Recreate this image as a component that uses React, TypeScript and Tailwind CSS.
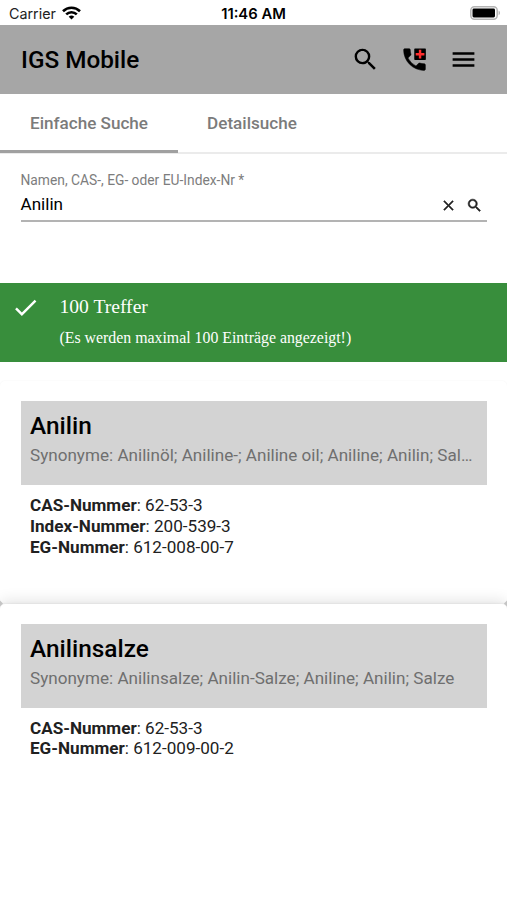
import type { ReactNode } from "react"

const SEARCH =
  "M15.5 14h-.79l-.28-.27A6.471 6.471 0 0 0 16 9.5 6.5 6.5 0 1 0 9.5 16c1.61 0 3.09-.59 4.23-1.57l.27.28v.79l5 4.99L20.49 19l-4.99-5zm-6 0C7.01 14 5 11.99 5 9.5S7.01 5 9.5 5 14 7.01 14 9.5 11.99 14 9.5 14z"

type Result = {
  name: string
  synonyms: string
  numbers: { label: string; value: string }[]
}

const results: Result[] = [
  {
    name: "Anilin",
    synonyms: "Anilinöl; Aniline-; Aniline oil; Aniline; Anilin; Sal…",
    numbers: [
      { label: "CAS-Nummer", value: "62-53-3" },
      { label: "Index-Nummer", value: "200-539-3" },
      { label: "EG-Nummer", value: "612-008-00-7" },
    ],
  },
  {
    name: "Anilinsalze",
    synonyms: "Anilinsalze; Anilin-Salze; Aniline; Anilin; Salze",
    numbers: [
      { label: "CAS-Nummer", value: "62-53-3" },
      { label: "EG-Nummer", value: "612-009-00-2" },
    ],
  },
]

function Icon({ className, children }: { className: string; children: ReactNode }) {
  return (
    <svg viewBox="0 0 24 24" fill="currentColor" className={className}>
      {children}
    </svg>
  )
}

function StatusBar() {
  return (
    <div className="grid h-[25px] grid-cols-3 items-center pt-[3px] font-[Inter,sans-serif] text-black">
      <div className="flex items-center gap-[6px] pl-[9px] text-[14.3px] leading-none text-[#222]">
        <span>Carrier</span>
        <svg viewBox="0 0 19 14" className="-mt-[2px] h-[14px] w-[19px] text-black" fill="none" stroke="currentColor" strokeWidth="2.6">
          <path d="M1 5.2a12.2 12.2 0 0 1 17 0" />
          <path d="M4.2 8.4a7.6 7.6 0 0 1 10.6 0" />
          <path d="M9.5 13.6 6.7 10.8a4 4 0 0 1 5.6 0z" fill="currentColor" stroke="none" />
        </svg>
      </div>
      <div className="text-center text-[14.8px] leading-none font-semibold">11:46 AM</div>
      <div className="-mt-[2px] flex justify-end pr-[6px]">
        <svg viewBox="0 0 31 14" className="h-[14px] w-[31px]">
          <rect x="0.8" y="0.8" width="26.4" height="12.4" rx="3.6" fill="#fff" stroke="#b4b4b4" strokeWidth="1.5" />
          <rect x="2.5" y="2.5" width="22.5" height="9" rx="1.4" fill="#000" />
          <path d="M28.6 4.8c1.8.6 1.8 3.8 0 4.4z" fill="#b4b4b4" />
        </svg>
      </div>
    </div>
  )
}

function Header() {
  return (
    <header className="flex h-[69px] items-center justify-between bg-[#a6a6a6] pr-[29.5px] pl-[21px] text-black">
      <h1 className="pt-[2px] text-[24.3px] leading-none font-medium">IGS Mobile</h1>
      <div className="flex items-center gap-[20px]">
        <Icon className="size-[29px]">
          <path d={SEARCH} />
        </Icon>
        <Icon className="size-[29px]">
          <path
            d="M20 15.5c-1.25 0-2.45-.2-3.57-.57a1.02 1.02 0 0 0-1.02.24l-2.2 2.2a15.045 15.045 0 0 1-6.59-6.59l2.2-2.21a.96.96 0 0 0 .25-1A11.36 11.36 0 0 1 8.5 4c0-.55-.45-1-1-1H4c-.55 0-1 .45-1 1 0 9.39 7.61 17 17 17 .55 0 1-.45 1-1v-3.5c0-.55-.45-1-1-1z"
            stroke="currentColor"
            strokeWidth="0.4"
          />
          <rect x="11.8" y="2.8" width="9.6" height="9.6" rx="0.6" />
          <path d="M15.6 4h2v2.6h2.6v2h-2.6v2.6h-2V8.6H13v-2h2.6z" fill="#ff2d2d" />
        </Icon>
        <Icon className="size-[29px]">
          <path d="M3 18h18v-2H3v2zm0-5h18v-2H3v2zm0-7v2h18V6H3z" />
        </Icon>
      </div>
    </header>
  )
}

function Tabs() {
  return (
    <nav className="flex h-[60px] border-b-2 border-[#ebebeb] text-[17.1px] font-medium text-[#7b7b7b]">
      <div className="-mb-px flex w-[178px] items-center justify-center border-b-[3px] border-[#a0a0a0] pt-[3px]">
        Einfache Suche
      </div>
      <div className="flex w-[148px] items-center justify-center pt-px">Detailsuche</div>
    </nav>
  )
}

function SearchField() {
  return (
    <div className="mx-[20.5px] mt-[18px] h-[50px] border-b-2 border-[#b3b3b3]">
      <div className="text-[13.8px] leading-[17px] text-[#7d7d7d]">Namen, CAS-, EG- oder EU-Index-Nr *</div>
      <div className="flex h-[30px] items-center justify-between">
        <span className="pt-px text-[17.1px] leading-none text-black">Anilin</span>
        <div className="flex items-center gap-[9px] pt-[3px] pr-[4px] text-[#222]">
          <Icon className="size-[17px]">
            <path
              d="M19 6.41 17.59 5 12 10.59 6.41 5 5 6.41 10.59 12 5 17.59 6.41 19 12 13.41 17.59 19 19 17.59 13.41 12z"
              stroke="currentColor"
              strokeWidth="0.6"
            />
          </Icon>
          <Icon className="size-[17px]">
            <path d={SEARCH} stroke="currentColor" strokeWidth="0.8" />
          </Icon>
        </div>
      </div>
    </div>
  )
}

function HitBanner() {
  return (
    <div className="mt-[60.5px] flex h-[79.5px] bg-[#388e3c] pl-[11px] font-['Liberation_Serif',serif] text-white">
      <Icon className="mt-[10px] size-[29px]">
        <path d="M9 16.17 4.83 12l-1.42 1.41L9 19 21 7l-1.41-1.41z" />
      </Icon>
      <div className="ml-[19.5px]">
        <div className="mt-[12.4px] text-[19.6px] leading-[24px]">100 Treffer</div>
        <div className="mt-[9px] text-[15.85px] leading-[20px]">(Es werden maximal 100 Einträge angezeigt!)</div>
      </div>
    </div>
  )
}

function ResultCard({ result }: { result: Result }) {
  return (
    <article className="h-[222.5px] rounded-[5px] bg-white px-[20.5px] pt-[20px] shadow-[0_0_2px_rgba(0,0,0,0.06)] last:h-[320px] last:shadow-[0_0_3px_rgba(0,0,0,0.1),0_-4px_14px_rgba(0,0,0,0.1)]">
      <div className="h-[84px] bg-[#d3d3d3] px-[9.5px] pt-[9px]">
        <h2 className="text-[24.4px] leading-[32px] font-medium text-black">{result.name}</h2>
        <p className="mt-[3px] truncate text-[17.1px] leading-[21px] text-[#6f6f6f]">Synonyme: {result.synonyms}</p>
      </div>
      <div className="px-[9.5px] pt-[10px] text-[17.1px] leading-[20.8px] text-[#212121]">
        {result.numbers.map((n) => (
          <div key={n.label}>
            <b className="font-bold">{n.label}</b>: {n.value}
          </div>
        ))}
      </div>
    </article>
  )
}

export default function App() {
  return (
    <div className="h-[900px] w-[507px] overflow-hidden bg-white font-[Roboto,sans-serif]">
      <StatusBar />
      <Header />
      <Tabs />
      <SearchField />
      <HitBanner />
      <main className="relative mt-[19px]">
        {/* grey notches where the rounded corners of two cards meet */}
        <span className="absolute top-[220px] -left-[3px] z-10 size-[5px] rotate-45 bg-[#c4c4c4]" />
        <span className="absolute top-[220px] -right-[3px] z-10 size-[5px] rotate-45 bg-[#c4c4c4]" />
        {results.map((result) => (
          <ResultCard key={result.name} result={result} />
        ))}
      </main>
    </div>
  )
}
